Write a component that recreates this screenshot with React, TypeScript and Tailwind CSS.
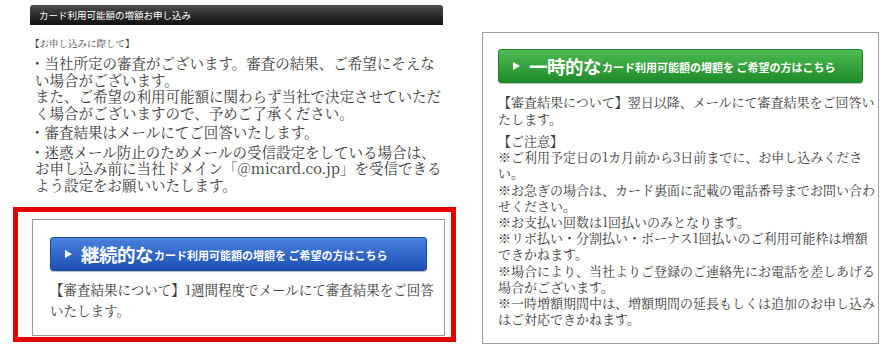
import React from 'react';

const font = "font-['Noto_Serif_CJK_JP','Noto_Sans_CJK_JP',serif]";
const btnFont = "font-['Noto_Sans_CJK_JP',sans-serif]";

function Arrow() {
  return (
    <svg width="7" height="8" viewBox="0 0 7 8" className="shrink-0">
      <path d="M0 0 L7 4 L0 8 Z" fill="#fff" />
    </svg>
  );
}

function ApplyButton({ big, color }: { big: string; color: 'blue' | 'green' }) {
  const bg =
    color === 'blue'
      ? 'bg-linear-to-b from-[#4a82e0] to-[#1d4fb3] border-[#1c4aa6]'
      : 'bg-linear-to-b from-[#4cbc52] to-[#1f8b2a] border-[#1d7f27]';
  return (
    <div className={`flex items-center h-[34px] rounded-[3px] border text-white shadow-[0_1px_1px_rgba(0,0,0,0.25)] ${bg} ${btnFont}`}>
      <div className="ml-[14px] mr-[9px] flex items-center">
        <Arrow />
      </div>
      <span className="text-[18.5px] font-bold leading-none tracking-[-0.5px]">{big}</span>
      <span className="text-[11px] font-bold leading-none ml-[1px] mt-[3px]">カード利用可能額の増額を ご希望の方はこちら</span>
    </div>
  );
}

export default function App() {
  return (
    <div className={`flex w-[887px] h-[350px] bg-white overflow-hidden text-[#3a3a3a] ${font}`}>
      {/* left column */}
      <div className="w-[470px] shrink-0 flex flex-col">
        <div className={`ml-[30px] mt-[5px] w-[413px] h-[20px] rounded-t-[3px] bg-linear-to-b from-[#4d4d4d] to-[#111] flex items-center pl-[9px] text-[9.5px] text-white ${btnFont}`}>
          カード利用可能額の増額お申し込み
        </div>
        <div className="ml-[30px] mt-[12px] whitespace-nowrap">
          <p className="text-[9.5px] leading-[12px]">【お申し込みに際して】</p>
          <div className="mt-[6px] text-[14.5px] leading-[16.5px] flex flex-col gap-[3px]">
            <div>
              <p>・当社所定の審査がございます。審査の結果、ご希望にそえな</p>
              <p className="pl-[5px]">い場合がございます。</p>
              <p className="pl-[5px]">また、ご希望の利用可能額に関わらず当社で決定させていただ</p>
              <p className="pl-[5px]">く場合がございますので、予めご了承ください。</p>
            </div>
            <div>
              <p>・審査結果はメールにてご回答いたします。</p>
            </div>
            <div>
              <p>・迷惑メール防止のためメールの受信設定をしている場合は、</p>
              <p className="pl-[5px]">お申し込み前に当社ドメイン「@micard.co.jp」を受信できる</p>
              <p className="pl-[5px]">よう設定をお願いいたします。</p>
            </div>
          </div>
        </div>
        <div className="ml-[13px] mt-[14px] w-[443px] h-[135px] border-[5px] border-[#e60000] pl-[14px] pr-[6px] pt-[7px] pb-[1px]">
          <div className="h-full border border-[#9a9a9a] pt-[17px] px-[17px]">
            <ApplyButton big="継続的な" color="blue" />
            <p className="mt-[8px] text-[13.5px] leading-[21px] whitespace-nowrap">
              【審査結果について】1週間程度でメールにて審査結果をご回答
            </p>
            <p className="text-[13.5px] leading-[21px]">いたします。</p>
          </div>
        </div>
      </div>

      {/* right column */}
      <div className="ml-[12px] mt-[32px] w-[397px] h-[312px] border border-[#a0a0a0] pt-[16px] px-[15px] whitespace-nowrap">
        <ApplyButton big="一時的な" color="green" />
        <div className="mt-[10px] text-[13px] leading-[17px]">
          <p>【審査結果について】翌日以降、メールにて審査結果をご回答い</p>
          <p>たします。</p>
        </div>
        <div className="mt-[6px] text-[13px] leading-[16.2px]">
          <p>【ご注意】</p>
          <p>※ご利用予定日の1カ月前から3日前までに、お申し込みくださ</p>
          <p>い。</p>
          <p>※お急ぎの場合は、カード裏面に記載の電話番号までお問い合わ</p>
          <p>せください。</p>
          <p>※お支払い回数は1回払いのみとなります。</p>
          <p>※リボ払い・分割払い・ボーナス1回払いのご利用可能枠は増額</p>
          <p>できかねます。</p>
          <p>※場合により、当社よりご登録のご連絡先にお電話を差しあげる</p>
          <p>場合がございます。</p>
          <p>※一時増額期間中は、増額期間の延長もしくは追加のお申し込み</p>
          <p>はご対応できかねます。</p>
        </div>
      </div>
    </div>
  );
}
